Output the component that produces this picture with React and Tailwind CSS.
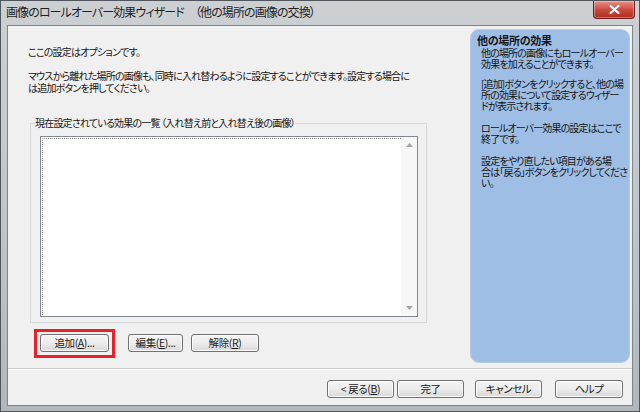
import React from "react";

const btn =
  "flex items-center justify-center h-[18px] rounded-[3px] border border-[#707070] text-[10.5px] tracking-[-0.4px] leading-none text-[#1a1a1a] bg-linear-to-b from-[#f4f4f4] via-[#ececec] to-[#d9d9d9] shadow-[inset_0_0_0_1px_#fbfbfb]";

function Arrow({ up }) {
  return (
    <svg width="7" height="4" viewBox="0 0 7 4">
      <path d={up ? "M0 4 L3.5 0 L7 4 Z" : "M0 0 L3.5 4 L7 0 Z"} fill="#a4a4a4" />
    </svg>
  );
}

export default function App() {
  return (
    <div className="w-[640px] h-[412px] flex flex-col border border-[#50565c] bg-linear-to-b from-[#cdd0d3] via-[#c2c6ca] to-[#b2b7bc] font-['Noto_Sans_CJK_JP',sans-serif] [font-feature-settings:'palt'] text-[#141414] overflow-hidden">
      {/* title bar */}
      <div className="h-[24px] flex items-start shrink-0">
        <div className="flex-1 pl-[5px] pt-[4px] text-[12px] tracking-[-0.9px] leading-[14px] text-[#1e1e1e] whitespace-nowrap">
          画像のロールオーバー効果ウィザード　（他の場所の画像の交換）
        </div>
        <div className="w-[42px] h-[18px] mr-[4px] rounded-b-[4px] border border-t-0 border-[#6b1f1f] bg-linear-to-b from-[#e39287] via-[#cc4b3f] to-[#b02a1f] flex items-center justify-center shadow-[inset_0_0_0_1px_rgba(255,255,255,0.35)]">
          <svg width="11" height="9" viewBox="0 0 11 9">
            <path d="M1.5 1 L9.5 8 M9.5 1 L1.5 8" stroke="white" strokeWidth="2.2" strokeLinecap="round" />
          </svg>
        </div>
      </div>

      {/* client */}
      <div className="flex-1 mx-[6px] mb-[5px] border border-[#7d848a] bg-[#f0f0f0] flex flex-col">
        <div className="h-[342px] flex">
          {/* left */}
          <div className="w-[462px] flex flex-col pl-[20px] pt-[20px] text-[10px] tracking-[-0.8px]">
            <p className="leading-[12px] whitespace-nowrap">ここの設定はオプションです。</p>
            <p className="mt-[12px] leading-[12px] whitespace-nowrap">
              マウスから離れた場所の画像も、同時に入れ替わるように設定することができます。設定する場合に
              <br />
              は追加ボタンを押してください。
            </p>

            <fieldset className="mt-[23px] ml-[2px] w-[397px] border border-[#d5d8db] pb-[5px]">
              <legend className="ml-[4px] leading-[12px] whitespace-nowrap">
                現在設定されている効果の一覧 （入れ替え前と入れ替え後の画像）
              </legend>
              <div className="mt-[7px] ml-[9px] mr-[8px] h-[181px] border border-[#828790] bg-white flex">
                <div className="flex-1 border-t border-l border-dotted border-[#8a8a8a] m-[1px] mr-0"></div>
                <div className="w-[16px] bg-[#f7f7f7] flex flex-col items-center justify-between py-[6px]">
                  <Arrow up />
                  <Arrow />
                </div>
              </div>
            </fieldset>

            <div className="mt-[11px] ml-[12px] flex">
              <div className="relative">
                <div className={`${btn} w-[69px]`}>
                  追加(<span className="underline">A</span>)...
                </div>
                <div className="absolute -left-[6px] -top-[5px] -right-[6px] -bottom-[6px] border-[3px] border-[#e8202a]"></div>
              </div>
              <div className={`${btn} w-[55px] ml-[19px]`}>
                編集(<span className="underline">E</span>)...
              </div>
              <div className={`${btn} w-[68px] ml-[8px]`}>
                解除(<span className="underline">R</span>)
              </div>
            </div>
          </div>

          {/* right help panel */}
          <div className="w-[160px] mt-[3px] mb-[5px] mr-[2px] rounded-[9px] bg-[#9ebee6] border border-[#b3cbe9] pl-[6px] pt-[4px] text-[10px] tracking-[-0.85px] leading-[11px] whitespace-nowrap overflow-hidden">
            <div className="font-bold text-[11px] tracking-[-0.3px] leading-[12px]">他の場所の効果</div>
            <div className="pl-[4px] mt-[1px]">
              <p>他の場所の画像にもロールオーバー<br />効果を加えることができます。</p>
              <p className="mt-[9px]">[追加]ボタンをクリックすると、他の場<br />所の効果について設定するウィザー<br />ドが表示されます。</p>
              <p className="mt-[11px]">ロールオーバー効果の設定はここで<br />終了です。</p>
              <p className="mt-[11px]">設定をやり直したい項目がある場<br />合は「戻る」ボタンをクリックしてくださ<br />い。</p>
            </div>
          </div>
        </div>

        <div className="border-t border-[#c8cacc] shadow-[0_1px_0_#ffffff]"></div>

        {/* bottom buttons */}
        <div className="flex-1 flex items-start justify-end pt-[11px] pr-[9px]">
          <div className={`${btn} w-[67px]`}>
            &lt; 戻る(<span className="underline">B</span>)
          </div>
          <div className={`${btn} w-[67px] ml-[3px] border-[#3c8ccc] shadow-[inset_0_0_0_1px_#a9dbf6]`}>完了</div>
          <div className={`${btn} w-[67px] ml-[11px]`}>キャンセル</div>
          <div className={`${btn} w-[68px] ml-[13px]`}>ヘルプ</div>
        </div>
      </div>
    </div>
  );
}
